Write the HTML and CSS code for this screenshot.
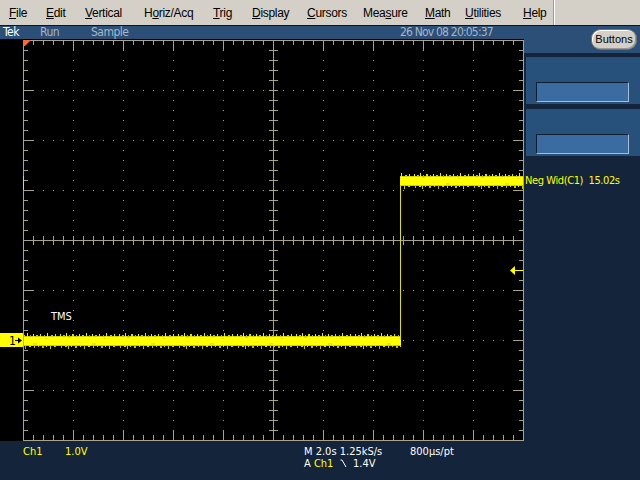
FILE: index.html
```html
<!DOCTYPE html>
<html>
<head>
<meta charset="utf-8">
<link rel="stylesheet" href="styles.css">
</head>
<body>
<div class="screen">
  <nav class="menubar">
    <span class="mi w37"><u>F</u>ile</span>
    <span class="mi w39"><u>E</u>dit</span>
    <span class="mi w59"><u>V</u>ertical</span>
    <span class="mi w69">H<u>o</u>riz/Acq</span>
    <span class="mi w39"><u>T</u>rig</span>
    <span class="mi w55"><u>D</u>isplay</span>
    <span class="mi w56"><u>C</u>ursors</span>
    <span class="mi w62">Mea<u>s</u>ure</span>
    <span class="mi w40"><u>M</u>ath</span>
    <span class="mi w58"><u>U</u>tilities</span>
    <span class="mi w30"><u>H</u>elp</span>
    <span class="sep"></span>
  </nav>
  <div class="main">
    <div class="left">
      <div class="status">
        <span class="tek">Tek</span>
        <span class="run">Run</span>
        <span class="sample">Sample</span>
        <span class="date">26 Nov 08 20:05:37</span>
      </div>
      <svg class="scope" width="524" height="402" viewBox="0 39 524 402" xmlns="http://www.w3.org/2000/svg">
        <defs>
          <pattern id="noise" patternUnits="userSpaceOnUse" x="0" y="0" width="59" height="16">
            <rect x="0" y="3" width="59" height="10" fill="#d0d000"/>
            <rect x="0" y="4" width="59" height="8" fill="#ffff00"/>
            <rect x="1" y="1" width="1" height="3" fill="#e8e800"/>
            <rect x="4" y="2" width="2" height="2" fill="#c8c800"/>
            <rect x="7" y="0" width="1" height="4" fill="#f0f000"/>
            <rect x="10" y="2" width="1" height="2" fill="#b8b800"/>
            <rect x="13" y="1" width="2" height="3" fill="#e0e000"/>
            <rect x="17" y="2" width="1" height="2" fill="#c8c800"/>
            <rect x="20" y="1" width="1" height="3" fill="#f0f000"/>
            <rect x="23" y="2" width="2" height="2" fill="#d0d000"/>
            <rect x="27" y="0" width="1" height="4" fill="#e8e800"/>
            <rect x="30" y="2" width="1" height="2" fill="#b0b000"/>
            <rect x="33" y="1" width="1" height="3" fill="#f0f000"/>
            <rect x="36" y="2" width="2" height="2" fill="#c8c800"/>
            <rect x="40" y="1" width="1" height="3" fill="#e0e000"/>
            <rect x="44" y="2" width="1" height="2" fill="#c0c000"/>
            <rect x="47" y="0" width="1" height="4" fill="#f0f000"/>
            <rect x="51" y="2" width="2" height="2" fill="#d0d000"/>
            <rect x="55" y="1" width="1" height="3" fill="#e8e800"/>
            <rect x="2" y="12" width="1" height="3" fill="#c0c000"/>
            <rect x="6" y="12" width="2" height="2" fill="#d8d800"/>
            <rect x="9" y="12" width="1" height="4" fill="#c8c800"/>
            <rect x="12" y="12" width="1" height="2" fill="#e0e000"/>
            <rect x="16" y="12" width="2" height="3" fill="#c0c000"/>
            <rect x="21" y="12" width="1" height="2" fill="#d8d800"/>
            <rect x="25" y="12" width="1" height="4" fill="#b8b800"/>
            <rect x="29" y="12" width="2" height="2" fill="#e0e000"/>
            <rect x="34" y="12" width="1" height="3" fill="#c8c800"/>
            <rect x="38" y="12" width="1" height="2" fill="#d8d800"/>
            <rect x="42" y="12" width="2" height="3" fill="#c0c000"/>
            <rect x="46" y="12" width="1" height="2" fill="#e0e000"/>
            <rect x="50" y="12" width="1" height="4" fill="#c8c800"/>
            <rect x="54" y="12" width="2" height="2" fill="#d0d000"/>
            <rect x="9" y="4" width="3" height="1" fill="#e4e400"/>
            <rect x="33" y="10" width="4" height="2" fill="#e8e810"/>
            <rect x="45" y="5" width="2" height="1" fill="#e4e400"/>
            <rect x="19" y="9" width="3" height="1" fill="#f0f020"/>
          </pattern>
        </defs>
        <g stroke="#a8a38a" fill="none" shape-rendering="crispEdges">
          <g stroke-dasharray="1 9" stroke-width="1">
            <line x1="73.5" y1="40" x2="73.5" y2="440"/>
            <line x1="123.5" y1="40" x2="123.5" y2="440"/>
            <line x1="173.5" y1="40" x2="173.5" y2="440"/>
            <line x1="223.5" y1="40" x2="223.5" y2="440"/>
            <line x1="323.5" y1="40" x2="323.5" y2="440"/>
            <line x1="373.5" y1="40" x2="373.5" y2="440"/>
            <line x1="423.5" y1="40" x2="423.5" y2="440"/>
            <line x1="473.5" y1="40" x2="473.5" y2="440"/>
            <line x1="23" y1="90.5" x2="523" y2="90.5"/>
            <line x1="23" y1="140.5" x2="523" y2="140.5"/>
            <line x1="23" y1="190.5" x2="523" y2="190.5"/>
            <line x1="23" y1="290.5" x2="523" y2="290.5"/>
            <line x1="23" y1="340.5" x2="523" y2="340.5"/>
            <line x1="23" y1="390.5" x2="523" y2="390.5"/>
          </g>
          <line x1="23" y1="42.5" x2="524" y2="42.5" stroke-width="5" stroke-dasharray="1 9"/>
          <line x1="23" y1="45.5" x2="524" y2="45.5" stroke-width="11" stroke-dasharray="1 49"/>
          <line x1="23" y1="437.5" x2="524" y2="437.5" stroke-width="5" stroke-dasharray="1 9"/>
          <line x1="23" y1="435" x2="524" y2="435" stroke-width="10" stroke-dasharray="1 49"/>
          <line x1="25.5" y1="40" x2="25.5" y2="441" stroke-width="5" stroke-dasharray="1 9"/>
          <line x1="28" y1="40" x2="28" y2="441" stroke-width="10" stroke-dasharray="1 49"/>
          <line x1="521.5" y1="40" x2="521.5" y2="441" stroke-width="5" stroke-dasharray="1 9"/>
          <line x1="518.5" y1="40" x2="518.5" y2="441" stroke-width="11" stroke-dasharray="1 49"/>
          <line x1="273.5" y1="40" x2="273.5" y2="441" stroke-width="9" stroke-dasharray="1 9"/>
          <line x1="23" y1="240.5" x2="524" y2="240.5" stroke-width="9" stroke-dasharray="1 9"/>
          <line x1="273.5" y1="40" x2="273.5" y2="441"/>
          <line x1="23" y1="240.5" x2="524" y2="240.5"/>
          <rect x="23.5" y="40.5" width="500" height="400"/>
        </g>
        <polygon points="23,40 31,40 25,46 23,46" fill="#ff6a28"/>
        <g shape-rendering="crispEdges">
          <rect x="23" y="176" width="1" height="14" fill="#e8e800"/>
          <g transform="translate(0,333)">
            <rect x="24" y="0" width="377" height="16" fill="url(#noise)"/>
          </g>
          <rect x="400" y="182" width="1" height="158" fill="#dede00"/>
          <g transform="translate(0,173)">
            <rect x="400" y="0" width="123" height="16" fill="url(#noise)"/>
          </g>
        </g>
        <rect x="0" y="333" width="23" height="14" fill="#ffff00"/>
        <text x="9" y="345" class="mk">1</text>
        <path d="M15 340.5 H20" stroke="#000" stroke-width="1"/>
        <polygon points="22,340.5 18,337.5 18,343.5" fill="#000"/>
        <text x="51" y="320" class="lbl">TMS</text>
        <path d="M514 270.5 H523" stroke="#ffff00" stroke-width="1"/>
        <polygon points="510,270.5 515,266 515,275" fill="#ffff00"/>
      </svg>
      <div class="readout">
        <div class="rrow">
          <span class="c1 y">Ch1</span>
          <span class="c2 y">1.0V</span>
          <span class="c3">M 2.0s 1.25kS/s</span>
          <span class="c4">800µs/pt</span>
        </div>
        <div class="rrow">
          <span class="c1"></span>
          <span class="c2"></span>
          <span class="c3">A <span class="y">Ch1</span>  <svg class="edge" width="7" height="9" viewBox="0 0 7 9"><path d="M0.5 1 H2 L6 8" stroke="#fff" fill="none" stroke-width="1"/></svg>  1.4V</span>
        </div>
      </div>
    </div>
    <div class="right">
      <div class="rtop"><div class="btn">Buttons</div></div>
      <div class="panel p1"><div class="box"></div></div>
      <div class="panel p2"><div class="box"></div></div>
      <div class="meas">Neg Wid(C1)&nbsp; 15.02s</div>
    </div>
  </div>
</div>
</body>
</html>
```

FILE: styles.css
```css
html, body {
  margin: 0;
  padding: 0;
  background: #000;
}

body {
  width: 640px;
  height: 480px;
  overflow: hidden;
  font-family: "Liberation Sans", Arial, sans-serif;
}

.screen {
  width: 640px;
  height: 480px;
  display: flex;
  flex-direction: column;
}

.menubar {
  height: 25px;
  background: #d4d0c8;
  border-bottom: 1px solid #0b1624;
  display: flex;
  align-items: center;
  padding-left: 9px;
  font-size: 12px;
  letter-spacing: -0.3px;
  color: #000;
}

.mi {
  flex: none;
  white-space: nowrap;
}

.mi u {
  text-decoration: underline;
  text-underline-offset: 1px;
}

.w30 { width: 30px; }
.w37 { width: 37px; }
.w39 { width: 39px; }
.w40 { width: 40px; }
.w55 { width: 55px; }
.w56 { width: 56px; }
.w58 { width: 58px; }
.w59 { width: 59px; }
.w62 { width: 62px; }
.w69 { width: 69px; }

.sep {
  align-self: stretch;
  width: 1px;
  background: #a09c94;
  border-right: 1px solid #fff;
}

.main {
  display: grid;
  grid-template-columns: 524px 116px;
  height: 454px;
}

.left {
  display: flex;
  flex-direction: column;
  background: #000;
}

.status {
  height: 13px;
  background: #2b4f77;
  display: flex;
  font-family: "Liberation Sans Narrow", "DejaVu Sans Condensed", sans-serif;
  font-size: 12px;
  letter-spacing: -0.5px;
  line-height: 13px;
  color: #a9b6c6;
}

.date {
  letter-spacing: -0.8px;
}

.tek {
  color: #fff;
  width: 37px;
  padding-left: 3px;
}

.run {
  width: 51px;
}

.sample {
  width: 309px;
}

.scope {
  display: block;
  background: #000;
}

.mk {
  font-family: "Liberation Sans Narrow", "DejaVu Sans Condensed", sans-serif;
  font-size: 12px;
  fill: #000;
}

.lbl {
  font-family: "Liberation Sans Narrow", "DejaVu Sans Condensed", sans-serif;
  font-size: 11px;
  fill: #fff;
}

.readout {
  flex: 1;
  background: #14243a;
  padding-top: 5px;
  font-family: "Liberation Sans Narrow", "DejaVu Sans Condensed", sans-serif;
  font-size: 11px;
  line-height: 12px;
  color: #fff;
}

.rrow {
  display: flex;
  height: 12px;
  white-space: pre;
}

.c1 {
  width: 42px;
  padding-left: 23px;
}

.c2 {
  width: 239px;
}

.c3 {
  width: 106px;
}

.y {
  color: #ffff00;
}

.edge {
  vertical-align: -1px;
}

.right {
  background: #14243a;
  display: flex;
  flex-direction: column;
}

.rtop {
  height: 27px;
  background: #2b4f77;
  display: flex;
  justify-content: flex-end;
  padding: 3px 3px 0 0;
  box-sizing: border-box;
}

.btn {
  width: 46px;
  height: 21px;
  box-sizing: border-box;
  background: #d4d0c8;
  border: 1px solid #707070;
  border-radius: 10px / 9px;
  box-shadow: inset 1px 1px 0 #ffffff, inset -1px -1px 0 #9a9890;
  font-size: 11px;
  line-height: 19px;
  text-align: center;
  color: #000;
}

.panel {
  height: 47px;
  margin-left: 2px;
  background: #27507a;
  padding: 25px 0 0 10px;
  box-sizing: border-box;
}

.p1 {
  margin-top: 4px;
}

.p2 {
  margin-top: 5px;
}

.box {
  width: 93px;
  height: 20px;
  box-sizing: border-box;
  background: #3a6ca2;
  border-top: 1px solid #0f1e30;
  border-left: 1px solid #0f1e30;
  border-bottom: 1px solid #a6bcd4;
  border-right: 1px solid #a6bcd4;
}

.meas {
  margin-top: 19px;
  padding-left: 1px;
  font-family: "Liberation Sans Narrow", "DejaVu Sans Condensed", sans-serif;
  font-size: 11px;
  letter-spacing: -0.4px;
  line-height: 12px;
  color: #ffff00;
  white-space: nowrap;
}
```
